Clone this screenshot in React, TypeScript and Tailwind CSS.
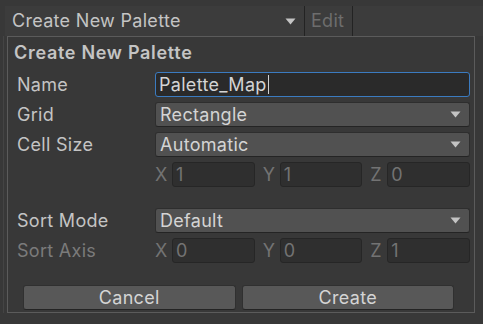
// Boîte « Create New Palette » de la Tile Palette (thème sombre)

const FONT = { fontFamily: "Inter, 'Noto Sans', sans-serif" };

function Fleche() {
  return (
    <svg width="11" height="7" viewBox="0 0 11 7" className="shrink-0">
      <path d="M0.5 0.5h10L5.5 6.5z" fill="#c4c4c4" />
    </svg>
  );
}

function Ligne({ label, disabled, children }: { label: string; disabled?: boolean; children: React.ReactNode }) {
  return (
    <div className="flex h-[25px] items-center">
      <span className={disabled ? "w-[138px] text-[#7b7b7b]" : "w-[138px] text-[#c4c4c4]"}>{label}</span>
      <div className="flex flex-1 h-full">{children}</div>
    </div>
  );
}

function Liste({ valeur }: { valeur: string }) {
  return (
    <div className="flex flex-1 items-center justify-between rounded-[3px] border border-[#2e2e2e] border-b-[#242424] bg-[#515151] pl-[4px] pr-[8px] text-[#d4d4d4]">
      <span>{valeur}</span>
      <Fleche />
    </div>
  );
}

function ChampXYZ({ valeurs }: { valeurs: [string, string, string] }) {
  const axes = ["X", "Y", "Z"];
  return (
    <div className="grid flex-1 grid-cols-3 gap-[8px]">
      {axes.map((a, i) => (
        <div key={a} className="flex items-stretch">
          <span className="w-[17px] self-center text-[#737373]">{a}</span>
          <div className="flex flex-1 items-center rounded-[3px] border border-[#262626] bg-[#2f2f2f] pl-[3px] text-[#737373]">
            {valeurs[i]}
          </div>
        </div>
      ))}
    </div>
  );
}

export default function App() {
  return (
    <div className="relative h-[324px] w-[483px] overflow-hidden bg-[#383838] text-[18px] leading-none tracking-[0.3px]" style={FONT}>
      {/* barre d'outils */}
      <div className="mt-[6px] ml-[5px] flex h-[30px] bg-[#3c3c3c]">
        <div className="flex w-[300px] items-center justify-between border-r border-[#232323] pl-[7px] pr-[8px] text-[#c4c4c4]">
          <span>Create New Palette</span>
          <Fleche />
        </div>
        <div className="flex w-[48px] items-center border-r border-[#232323] pl-[6px] text-[#6d6d6d]">Edit</div>
      </div>

      {/* boîte de dialogue */}
      <div className="flex">
        <div className="ml-[3px] w-px bg-[#444444]" />
        <div className="ml-[3px] h-[277px] w-[468px] border border-[#5b5b5b] bg-[#383838] pt-[7px] pl-[6px] pr-[4px]">
          <div className="font-semibold text-[#c4c4c4] tracking-[0.7px]">Create New Palette</div>
          <div className="mt-[10px] flex flex-col gap-[5px] pl-[3px]">
            <Ligne label="Name">
              <div className="flex flex-1 items-center rounded-[3px] border border-[#3b7bc0] bg-[#2a2a2a] pl-[3px] text-[#d4d4d4]">
                <span>Palette_Map</span>
                <span className="ml-[1px] h-[19px] w-px bg-[#d2d2d2]" />
              </div>
            </Ligne>
            <Ligne label="Grid">
              <Liste valeur="Rectangle" />
            </Ligne>
            <Ligne label="Cell Size">
              <Liste valeur="Automatic" />
            </Ligne>
            <Ligne label="">
              <ChampXYZ valeurs={["1", "1", "0"]} />
            </Ligne>
            <div className="h-[11px]" />
            <Ligne label="Sort Mode">
              <Liste valeur="Default" />
            </Ligne>
            <Ligne label="Sort Axis" disabled>
              <ChampXYZ valeurs={["0", "0", "1"]} />
            </Ligne>
          </div>
          <div className="mt-[22px] flex gap-[6px] pl-[9px] pr-[16px]">
            {["Cancel", "Create"].map((b) => (
              <div
                key={b}
                className="flex h-[25px] flex-1 items-center justify-center rounded-[3px] border border-[#303030] border-b-[#242424] bg-[#585858] text-[#d4d4d4]"
              >
                {b}
              </div>
            ))}
          </div>
        </div>
      </div>
    </div>
  );
}
